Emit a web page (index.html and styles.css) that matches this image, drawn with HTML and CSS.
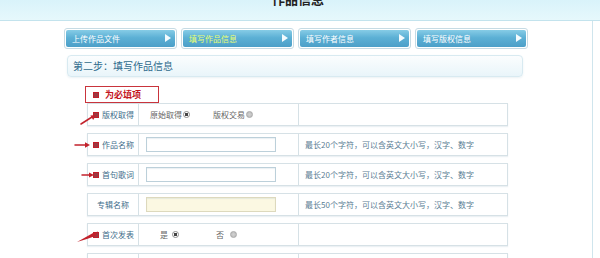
FILE: index.html
```html
<!DOCTYPE html>
<html lang="zh-CN">
<head>
  <meta charset="UTF-8" />
  <title>作品信息</title>
  <link rel="stylesheet" href="styles.css">
</head>
<body>
  <div class="top">
    <h1>作品信息</h1>
  </div>

  <div class="page">
    <div class="main">
      <ul class="steps">
        <li><span>上传作品文件</span><i class="arrow"></i></li>
        <li class="on"><span>填写作品信息</span><i class="arrow"></i></li>
        <li><span>填写作者信息</span><i class="arrow"></i></li>
        <li><span>填写版权信息</span><i class="arrow"></i></li>
      </ul>

      <div class="step-title">第二步：填写作品信息</div>

      <div class="must"><i class="dot"></i>为必填项</div>

      <div class="form">
        <div class="row">
          <div class="label"><i class="dot"></i>版权取得</div>
          <div class="field">
            <label class="opt first">原始取得<input type="radio" name="get" checked /></label>
            <label class="opt">版权交易<input type="radio" name="get" /></label>
          </div>
          <div class="tip"></div>
        </div>

        <div class="row">
          <div class="label"><i class="dot"></i>作品名称</div>
          <div class="field"><input type="text" class="text" /></div>
          <div class="tip">最长20个字符，可以含英文大小写，汉字、数字</div>
        </div>

        <div class="row">
          <div class="label"><i class="dot"></i>首句歌词</div>
          <div class="field"><input type="text" class="text" /></div>
          <div class="tip">最长20个字符，可以含英文大小写，汉字、数字</div>
        </div>

        <div class="row">
          <div class="label center">专辑名称</div>
          <div class="field"><input type="text" class="text soft" /></div>
          <div class="tip">最长50个字符，可以含英文大小写，汉字、数字</div>
        </div>

        <div class="row">
          <div class="label"><i class="dot"></i>首次发表</div>
          <div class="field">
            <label class="opt yes">是<input type="radio" name="first" checked /></label>
            <label class="opt no">否<input type="radio" name="first" /></label>
          </div>
          <div class="tip"></div>
        </div>

        <div class="row">
          <div class="label"></div>
          <div class="field"></div>
          <div class="tip"></div>
        </div>
      </div>
    </div>
  </div>

  <svg class="marks" width="600" height="258" viewBox="0 0 600 258">
    <g stroke="#c2222c" stroke-width="1.5" fill="none" stroke-linecap="round">
      <path d="M81 124 L92 117" />
      <path d="M75 145 L85 145" />
      <path d="M82 175 L89 175" />
    </g>
    <g fill="#c2222c">
      <polygon points="96,115 93.2,120 90.4,115.6" />
      <polygon points="90,145 85,142.3 85,147.7" />
      <polygon points="94,175 89,172.5 89,177.5" />
      <path d="M77 242 Q86 237 93 233 L98 231.5 L95.5 236 Q86 239.5 77 242 Z" />
    </g>
  </svg>
</body>
</html>
```

FILE: styles.css
```css
body {
  margin: 0;
  position: relative;
  font-family: "Noto Sans CJK SC", "Noto Sans", sans-serif;
  background: #fff;
  color: #555;
}
.top {
  height: 20px;
  overflow: hidden;
  background: linear-gradient(to bottom, #d9f3fa, #e6f8fc);
  border-bottom: 1px solid #c3e3ed;
  text-align: center;
}
.top h1 {
  margin: -9px 0 0 -4px;
  font-size: 13px;
  line-height: 16px;
  color: #222;
}
.page {
  width: 592px;
  height: 237px;
  border-right: 1px solid #cfe5ed;
  overflow: hidden;
}
.main {
  width: 464px;
  margin: 0 auto;
  padding-top: 7px;
}
.steps {
  list-style: none;
  margin: 0;
  padding: 0;
  display: flex;
  gap: 4px;
}
.steps li {
  position: relative;
  width: 113px;
  height: 21px;
  box-sizing: border-box;
  border: 1px solid #c6dbe4;
  border-radius: 3px;
  padding: 1px;
  background: #fff;
}
.steps span {
  display: block;
  height: 100%;
  border-radius: 2px;
  background: linear-gradient(to bottom, #86cce6, #5cb0d5 45%, #4c9fc8);
  color: #fff;
  font-size: 8px;
  line-height: 17px;
  padding-left: 6px;
}
.steps li.on span {
  color: #eaff72;
}
.steps .arrow {
  position: absolute;
  right: 5px;
  top: 5px;
  width: 0;
  height: 0;
  border-top: 4.5px solid transparent;
  border-bottom: 4.5px solid transparent;
  border-left: 6px solid #f4fbfe;
}
.step-title {
  margin: 6px 0 0 3px;
  width: 456px;
  height: 22px;
  box-sizing: border-box;
  border: 1px solid #d8eaf1;
  border-radius: 4px;
  background: linear-gradient(to bottom, #fbfdfe, #e9f5fa);
  box-shadow: 0 1px 2px rgba(120, 170, 190, 0.15);
  font-size: 10px;
  line-height: 20px;
  padding-left: 5px;
  color: #2f6a8c;
}
.must {
  margin: 9px 0 0 21px;
  width: 74px;
  height: 17px;
  box-sizing: border-box;
  border: 1px solid #c9343c;
  display: flex;
  align-items: center;
  padding-left: 7px;
  gap: 6px;
  font-size: 9px;
  font-weight: bold;
  color: #c3161e;
}
.dot {
  display: inline-block;
  width: 6px;
  height: 6px;
  box-sizing: border-box;
  border: 1.5px solid #c21f2a;
  background: #9b3a42;
  flex: none;
}
.form {
  margin-left: 23px;
  width: 421px;
  display: flex;
  flex-direction: column;
  gap: 7px;
}
.row {
  display: grid;
  grid-template-columns: 51px 160px 1fr;
  height: 23px;
  box-sizing: border-box;
  border: 1px solid #d6e1e6;
  box-shadow: 0 1px 1px rgba(180, 200, 210, 0.25);
}
.row > div {
  display: flex;
  align-items: center;
  font-size: 8px;
}
.label {
  border-right: 1px solid #d6e1e6;
  padding-left: 5px;
  gap: 3px;
  color: #3e6d8a;
}
.label.center {
  justify-content: center;
  padding-left: 0;
}
.field {
  border-right: 1px solid #d6e1e6;
  color: #666;
}
.tip {
  padding-left: 6px;
  color: #5a7d93;
}
.opt {
  display: flex;
  align-items: center;
}
.opt.first {
  margin-left: 11px;
}
.opt + .opt {
  margin-left: 23px;
}
.opt.yes {
  margin-left: 21px;
  gap: 3px;
}
.opt.yes + .opt.no {
  margin-left: 37px;
  gap: 5px;
}
.opt input {
  appearance: none;
  margin: 0 0 0 1px;
  width: 7px;
  height: 7px;
  border-radius: 50%;
  border: 1px solid #a9a9a9;
  background: radial-gradient(circle, #d2d2d2, #b9b9b9);
}
.opt input:checked {
  background: radial-gradient(circle, #444 0 1.6px, #fff 2px);
  border-color: #8d8d8d;
}
.text {
  margin: 0 0 0 7px;
  width: 130px;
  height: 15px;
  box-sizing: border-box;
  border: 1px solid #bcd0da;
  background: #fff;
  box-shadow: inset 0 1px 1px rgba(150, 180, 195, 0.2);
}
.text.soft {
  background: #fbf8e2;
  border-color: #ddd9bd;
}
.marks {
  position: absolute;
  left: 0;
  top: 0;
  pointer-events: none;
}
```
